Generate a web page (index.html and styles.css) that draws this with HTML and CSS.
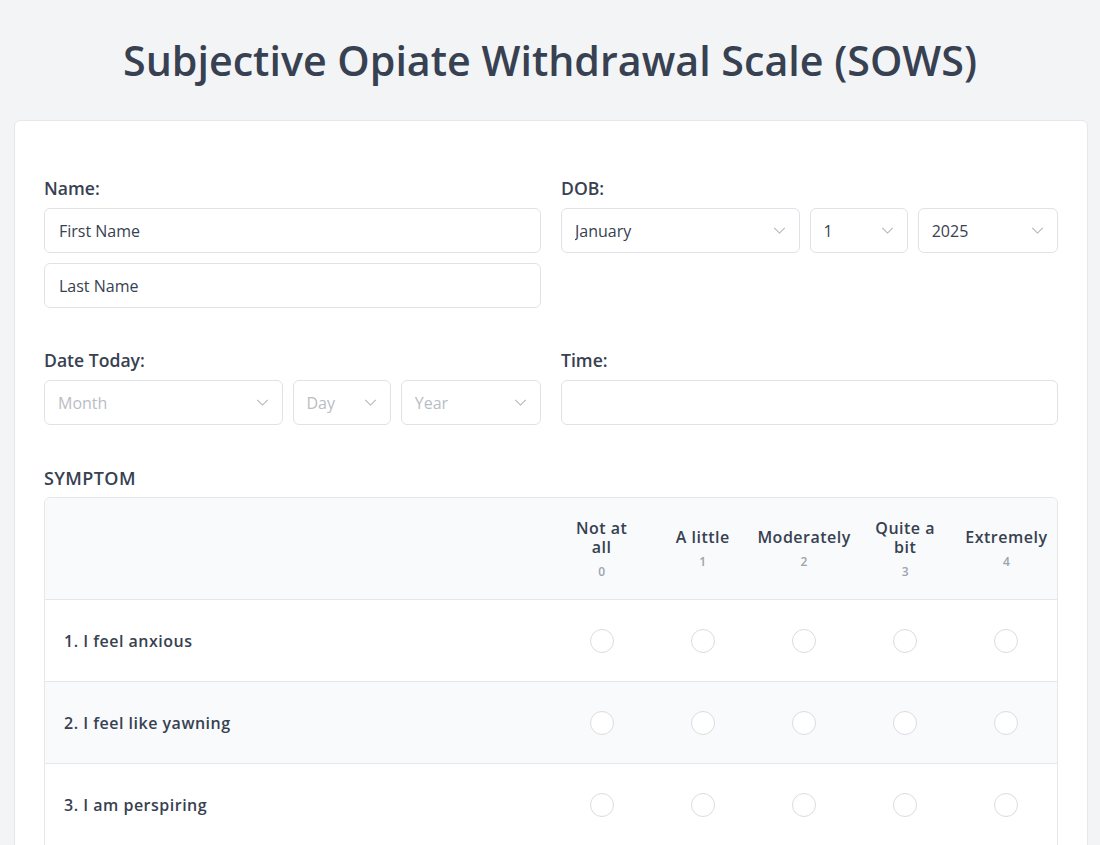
FILE: index.html
```html
<!DOCTYPE html>
<html lang="en">
<head>
<meta charset="utf-8">
<title>SOWS</title>
<link rel="stylesheet" href="styles.css">
</head>
<body>
<h1 class="title">Subjective Opiate Withdrawal Scale (SOWS)</h1>
<div class="card">
  <div class="grid">
    <div class="field">
      <label class="label">Name:</label>
      <input class="input" type="text" value="First Name">
      <input class="input" type="text" value="Last Name">
    </div>
    <div class="field">
      <label class="label">DOB:</label>
      <div class="selects">
        <div class="sel sel-month"><select><option>January</option></select><svg class="chev" viewBox="0 0 14 8"><path d="M1 1l6 6 6-6"/></svg></div>
        <div class="sel sel-day"><select><option>1</option></select><svg class="chev" viewBox="0 0 14 8"><path d="M1 1l6 6 6-6"/></svg></div>
        <div class="sel sel-year"><select><option>2025</option></select><svg class="chev" viewBox="0 0 14 8"><path d="M1 1l6 6 6-6"/></svg></div>
      </div>
    </div>
    <div class="field">
      <label class="label">Date Today:</label>
      <div class="selects">
        <div class="sel sel-month"><select class="ph"><option>Month</option></select><svg class="chev" viewBox="0 0 14 8"><path d="M1 1l6 6 6-6"/></svg></div>
        <div class="sel sel-day"><select class="ph"><option>Day</option></select><svg class="chev" viewBox="0 0 14 8"><path d="M1 1l6 6 6-6"/></svg></div>
        <div class="sel sel-year"><select class="ph"><option>Year</option></select><svg class="chev" viewBox="0 0 14 8"><path d="M1 1l6 6 6-6"/></svg></div>
      </div>
    </div>
    <div class="field">
      <label class="label">Time:</label>
      <input class="input" type="text" value="">
    </div>
  </div>

  <div class="section-label">SYMPTOM</div>
  <table class="scale">
    <thead>
      <tr>
        <th class="sym-col"></th>
        <th><span class="opt">Not at</span><span class="opt">all</span><span class="num">0</span></th>
        <th><span class="opt">A little</span><span class="num">1</span></th>
        <th><span class="opt">Moderately</span><span class="num">2</span></th>
        <th><span class="opt">Quite a</span><span class="opt">bit</span><span class="num">3</span></th>
        <th><span class="opt">Extremely</span><span class="num">4</span></th>
      </tr>
    </thead>
    <tbody>
      <tr>
        <td class="sym">1. I feel anxious</td>
        <td><input type="radio" name="q1"></td><td><input type="radio" name="q1"></td><td><input type="radio" name="q1"></td><td><input type="radio" name="q1"></td><td><input type="radio" name="q1"></td>
      </tr>
      <tr>
        <td class="sym">2. I feel like yawning</td>
        <td><input type="radio" name="q2"></td><td><input type="radio" name="q2"></td><td><input type="radio" name="q2"></td><td><input type="radio" name="q2"></td><td><input type="radio" name="q2"></td>
      </tr>
      <tr>
        <td class="sym">3. I am perspiring</td>
        <td><input type="radio" name="q3"></td><td><input type="radio" name="q3"></td><td><input type="radio" name="q3"></td><td><input type="radio" name="q3"></td><td><input type="radio" name="q3"></td>
      </tr>
    </tbody>
  </table>
</div>
</body>
</html>
```
FILE: styles.css
```css
* { box-sizing: border-box; }
html, body { margin: 0; padding: 0; }
body {
  background: #f3f4f6;
  font-family: "Open Sans", "Noto Sans", sans-serif;
  color: #374151;
}
.title {
  margin: 0;
  padding: 32px 0 0;
  height: 120px;
  text-align: center;
  font-size: 41.2px;
  font-weight: 600;
  color: #374151;
  line-height: 56px;
}
.card {
  margin: 0 12px 0 14px;
  background: #fff;
  border: 1px solid #e5e7eb;
  border-radius: 6px;
  padding: 58px 29px 40px;
}
.grid {
  display: grid;
  grid-template-columns: 1fr 1fr;
  column-gap: 20px;
  row-gap: 43px;
}
.field {
  display: flex;
  flex-direction: column;
  gap: 10px;
}
.label {
  font-size: 17.6px;
  font-weight: 600;
  line-height: 19px;
}
.input {
  height: 45px;
  border: 1px solid #dfe2e6;
  border-radius: 6px;
  padding: 0 14px;
  font-family: inherit;
  font-size: 16px;
  color: #374151;
  background: #fff;
  outline: none;
}
.selects {
  display: flex;
  gap: 10px;
}
.sel { position: relative; }
.sel-month { flex: 238 1 0; }
.sel-day { flex: 98 1 0; }
.sel-year { flex: 140 1 0; }
.sel select {
  appearance: none;
  -webkit-appearance: none;
  width: 100%;
  height: 45px;
  border: 1px solid #dfe2e6;
  border-radius: 6px;
  background: #fff;
  padding: 0 13px;
  font-family: inherit;
  font-size: 16px;
  color: #374151;
  outline: none;
}
.sel select.ph { color: #b9bdc4; }
.chev {
  position: absolute;
  right: 14px;
  top: 19px;
  width: 13px;
  height: 7px;
  fill: none;
  stroke: #b0b4bb;
  stroke-width: 1.2;
}
.section-label {
  margin-top: 44px;
  font-size: 18px;
  letter-spacing: 0.4px;
  font-weight: 600;
  line-height: 19px;
  margin-bottom: 9px;
}
.scale {
  width: 100%;
  border-collapse: separate;
  border-spacing: 0;
  border: 1px solid #e5e7eb;
  border-radius: 6px 6px 0 0;
  table-layout: fixed;
}
.scale th {
  background: #f9fafb;
  height: 102px;
  border-bottom: 1px solid #e5e7eb;
  font-weight: 600;
  font-size: 16px;
  letter-spacing: 0.5px;
  line-height: 19px;
  text-align: center;
  vertical-align: middle;
  padding: 0 4px;
  color: #374151;
}
.scale th:first-child { border-top-left-radius: 6px; }
.scale th:last-child { border-top-right-radius: 6px; }
.scale th.sym-col { width: 506px; }
.opt { display: block; }
.num {
  display: block;
  font-size: 12px;
  line-height: 15px;
  letter-spacing: 0;
  color: #9ca3af;
  font-weight: 600;
  margin-top: 7px;
}
.scale td {
  height: 82px;
  border-bottom: 1px solid #e5e7eb;
  text-align: center;
  vertical-align: middle;
}
.scale tbody tr:nth-child(even) td { background: #f9fafb; }
.scale td.sym {
  text-align: left;
  padding-left: 19px;
  font-size: 16px;
  font-weight: 600;
  letter-spacing: 0.5px;
  color: #374151;
}
.scale input[type=radio] {
  appearance: none;
  -webkit-appearance: none;
  width: 24px;
  height: 24px;
  margin: 0;
  border: 1px solid #d9dce1;
  border-radius: 50%;
  background: #fff;
  vertical-align: middle;
}
```
